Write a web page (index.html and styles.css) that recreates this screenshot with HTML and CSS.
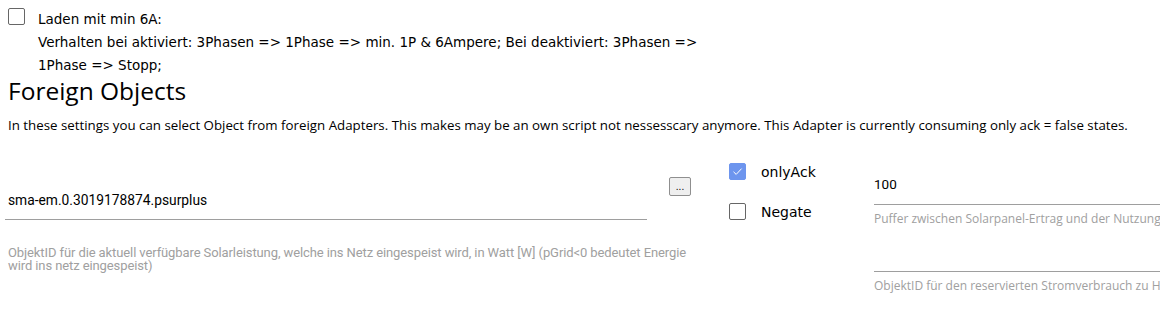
FILE: index.html
```html
<!DOCTYPE html>
<html lang="de">
<head>
    <meta charset="UTF-8">
    <title>Foreign Objects</title>
    <link rel="stylesheet" href="styles.css">
</head>
<body>
<div class="page">

<div class="check-row">
    <span class="box"></span>
    <div class="check-text">
        Laden mit min 6A:<br>
        Verhalten bei aktiviert: 3Phasen =&gt; 1Phase =&gt; min. 1P &amp; 6Ampere; Bei deaktiviert: 3Phasen =&gt; 1Phase =&gt; Stopp;
    </div>
</div>

<h2>Foreign Objects</h2>
<p class="intro">In these settings you can select Object from foreign Adapters. This makes may be an own script not nessesscary anymore. This Adapter is currently consuming only ack = false states.</p>

<div class="fields">
    <div class="col-main">
        <div class="field-line">
            <div class="field">sma-em.0.3019178874.psurplus</div>
            <button class="pick">...</button>
        </div>
        <div class="help">ObjektID für die aktuell verfügbare Solarleistung, welche ins Netz eingespeist wird, in Watt [W] (pGrid&lt;0 bedeutet Energie wird ins netz eingespeist)</div>
    </div>

    <div class="col-checks">
        <div class="opt"><span class="box checked"><svg viewBox="0 0 17 17" width="17" height="17"><path d="M4.5 8.8 L7.2 11.4 L12.6 5.6" fill="none" stroke="#fff" stroke-width="1"/></svg></span>onlyAck</div>
        <div class="opt"><span class="box"></span>Negate</div>
    </div>

    <div class="col-right">
        <div class="field">100</div>
        <div class="help wide">Puffer zwischen Solarpanel-Ertrag und der Nutzung für die Ladung in Watt [W]</div>
        <div class="field empty"></div>
        <div class="help wide">ObjektID für den reservierten Stromverbrauch zu Hause in Watt [W]</div>
    </div>
</div>

</div>
</body>
</html>
```

FILE: styles.css
```css
body {
    margin: 0;
    font-family: 'DejaVu Sans', sans-serif;
    color: #000;
    background: #fff;
    overflow: hidden;
}
.page { padding: 8px 0 0 8px; }

.box {
    display: inline-block;
    box-sizing: border-box;
    width: 17px;
    height: 17px;
    border: 1.5px solid #666;
    border-radius: 2px;
    flex: none;
}
.box.checked { background: #6d95ee; border-color: #6d95ee; }
.box.checked svg { display: block; margin: -1.5px; }

.check-row { display: flex; gap: 13px; }
.check-text {
    font-size: 13.5px;
    line-height: 23px;
    width: 665px;
}

h2 {
    font-family: 'Open Sans', sans-serif;
    font-weight: normal;
    font-size: 24.5px;
    line-height: 30px;
    margin: -1px 0 0 0;
}
.intro {
    font-family: 'Open Sans', sans-serif;
    font-size: 13.3px;
    line-height: 18px;
    margin: 10px 0 0 0;
    white-space: nowrap;
}

.fields { display: flex; margin: 26px 0 0 -3px; }

.col-main { width: 686px; flex: none; }
.field-line { display: flex; align-items: flex-start; gap: 22px; }
.field {
    font-family: Roboto, sans-serif;
    border-bottom: 1px solid #9e9e9e;
    box-sizing: border-box;
}
.col-main .field {
    width: 642px;
    font-size: 13.8px;
    padding: 31px 3px 9px 3px;
    line-height: 19px;
}
.pick {
    margin-top: 17px;
    width: 22px;
    height: 19px;
    padding: 0;
    font-size: 10px;
    line-height: 12px;
    background: #efefef;
    border: 1px solid #8f8f8f;
    border-radius: 2px;
}
.help {
    font-family: Roboto, sans-serif;
    font-size: 13px;
    letter-spacing: -0.1px;
    color: #a0a0a0;
    line-height: 13px;
    padding: 26px 0 0 3px;
}

.col-checks { width: 145px; flex: none; margin-left: 38px; padding-top: 3px; }
.opt {
    display: flex;
    align-items: center;
    gap: 15px;
    font-size: 14px;
    height: 17px;
    margin-bottom: 23px;
}

.col-right { flex: 1; min-width: 0; overflow: hidden; }
.col-right .field {
    font-size: 13.5px;
    padding: 14px 0 10px 0;
    line-height: 20px;
    height: 45px;
}
.col-right .field.empty { height: 46px; padding: 0; }
.help.wide {
    font-family: 'Open Sans', sans-serif;
    font-size: 12px;
    letter-spacing: 0;
    white-space: nowrap;
    padding: 6px 0 0 0;
    line-height: 15px;
}
```
